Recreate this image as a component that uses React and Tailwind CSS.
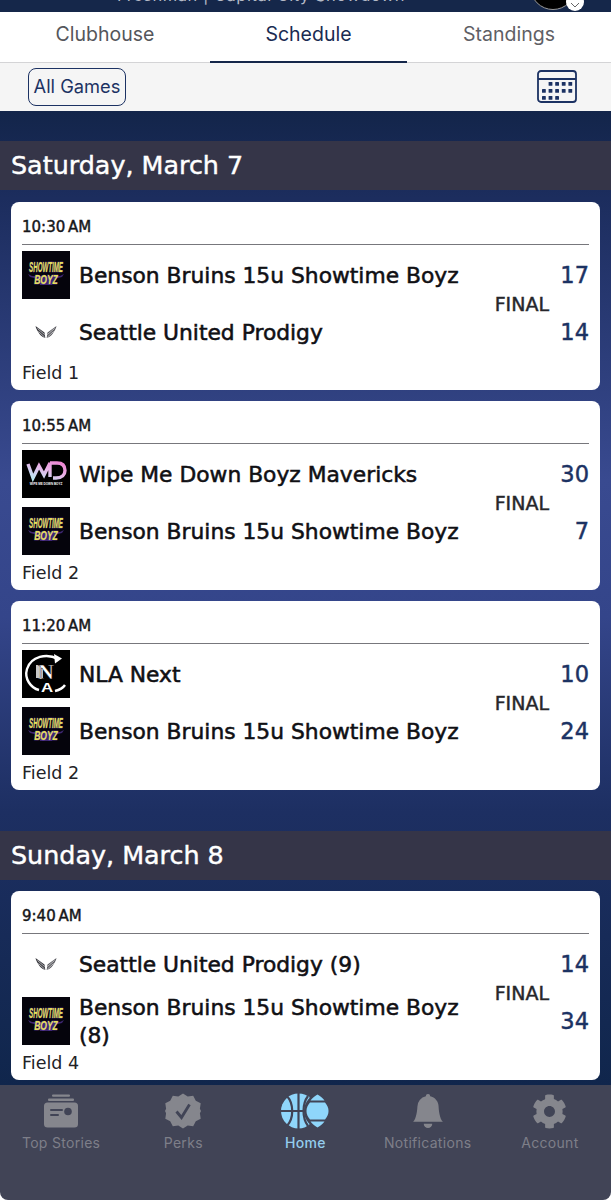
import React from "react";
import { FaCog } from "react-icons/fa";
import { BsBellFill } from "react-icons/bs";

function Showtime() {
  return (
    <svg viewBox="0 0 48 48" className="w-12 h-12 shrink-0 bg-black">
      <rect width="48" height="48" fill="#05040c" />
      <path d="M6 23l4 2h28l4-2-2 3-8 2-2 6H18l-2-6-8-2z" fill="#3d2670" />
      <g fontFamily="'Liberation Sans', sans-serif" fontWeight="700" fontStyle="italic" textAnchor="middle" fill="#e6e257" stroke="#7a4ac0" strokeWidth="0.7" paintOrder="stroke">
        <text transform="translate(24 21) scale(0.41 1)" fontSize="15">SHOWTIME</text>
        <text transform="translate(24 33) scale(0.68 1)" fontSize="12.500">BOYZ</text>
      </g>
    </svg>
  );
}

function Wings() {
  return (
    <svg viewBox="0 0 48 48" className="w-12 h-12 shrink-0">
      <path d="M13.500 18l9 6.500.8 5.500c-3.500-1-6-3.500-7-6-1.200-1.500-2.300-3.700-2.800-6z" fill="#3a3a40" />
      <path d="M34.500 18l-9 6.500-.8 5.500c3.500-1 6-3.500 7-6 1.200-1.500 2.300-3.700 2.800-6z" fill="#5a5a60" />
      <path d="M16.500 23.500l6 5.500M31.500 23.500l-6 5.500M15.500 20.500l7 6M32.500 20.500l-7 6" stroke="#fff" strokeWidth=".6" />
    </svg>
  );
}

function Wmd() {
  return (
    <svg viewBox="0 0 48 48" className="w-12 h-12 shrink-0">
      <defs>
        <linearGradient id="wmdg" x1="0" y1="1" x2="1" y2="0">
          <stop offset="0" stopColor="#b7ecf5" />
          <stop offset="0.55" stopColor="#e8b4e8" />
          <stop offset="1" stopColor="#ee7fd0" />
        </linearGradient>
      </defs>
      <rect width="48" height="48" fill="#000" />
      <path d="M6 14l5 14 6-12 5 9 6-12v14M28 13h7c6 0 8 3.500 8 7.500S40 28 34 28h-3" fill="none" stroke="url(#wmdg)" strokeWidth="3.400" />
      <text x="24" y="34.500" textAnchor="middle" fontSize="3" fontWeight="700" fill="#fff" fontFamily="'Liberation Sans', sans-serif">WIPE ME DOWN BOYZ</text>
    </svg>
  );
}

function Nla() {
  return (
    <svg viewBox="0 0 48 48" className="w-12 h-12 shrink-0">
      <rect width="48" height="48" fill="#000" />
      <path d="M36 9C25 3 9 6 5 19c-3 10 4 19 12 21M33 41c4-1 8-3 10-6" fill="none" stroke="#fff" strokeWidth="2.400" />
      <path d="M32 4l8 4.500-7 5z" fill="#fff" />
      <rect x="14" y="15" width="7" height="13" fill="#c9c9c9" />
      <text x="24" y="28.500" textAnchor="middle" fontSize="22" fontWeight="700" fill="#fff" fontFamily="'Liberation Serif', serif" stroke="#000" strokeWidth="0.4">N</text>
      <text transform="translate(25 41.500) scale(1.300 1)" textAnchor="middle" fontSize="13" fontWeight="700" fill="#fff" fontFamily="'Liberation Sans', sans-serif">A</text>
    </svg>
  );
}

const logos = { show: Showtime, wings: Wings, wmd: Wmd, nla: Nla };

function Team({ logo, name }) {
  const Logo = logos[logo];
  return (
    <div className="flex items-center gap-[9px] h-12">
      <Logo />
      <div className="w-[394px] text-[21.800px] leading-[28px] pt-[1px] text-[#101014] [-webkit-text-stroke:0.55px_#101014]">{name}</div>
    </div>
  );
}

function Card({ time, a, b, field, tall }) {
  return (
    <div className={tall ? "bg-white rounded-lg px-[11px] h-[189px] flex flex-col" : "bg-white rounded-lg px-[11px] h-[188px] flex flex-col"}>
      <div className="h-[43px] border-b border-[#77777c] flex items-center text-[15px] text-[#17171a] [-webkit-text-stroke:0.45px_#17171a] [word-spacing:-2px] pt-[8px] shrink-0">
        {time}
      </div>
      <div className="flex justify-between mt-[6px]">
        <div className="flex flex-col gap-[9px]">
          <Team logo={a.logo} name={a.name} />
          <Team logo={b.logo} name={b.name} />
        </div>
        <div className="flex items-center gap-[2px] shrink-0">
          <div className="w-[56px] text-right text-[19px] leading-none text-[#26262b] [-webkit-text-stroke:0.45px_#26262b] mt-[1px] whitespace-nowrap">
            FINAL
          </div>
          <div className="flex flex-col gap-[9px] w-[38px] text-right">
            <div className="h-12 flex items-center justify-end pt-[1px] text-[22.500px] text-[#1c3263] [-webkit-text-stroke:0.45px_#1c3263]">{a.score}</div>
            <div className="h-12 flex items-center justify-end pt-[1px] text-[22.500px] text-[#1c3263] [-webkit-text-stroke:0.45px_#1c3263]">{b.score}</div>
          </div>
        </div>
      </div>
      <div className="flex-1 flex items-center text-[17.500px] text-[#222226] pt-[1px]">{field}</div>
    </div>
  );
}

function DayHeader({ children }) {
  return (
    <div className="h-[49px] bg-[#353548] flex items-center px-[11px] text-[25.400px] text-white [-webkit-text-stroke:0.45px_#fff]">
      {children}
    </div>
  );
}

function CalendarIcon() {
  const dots = [];
  [12, 19, 26].forEach((y, r) => {
    for (let i = 0; i < 5; i++) {
      const on = r === 0 ? i >= 1 : r === 1 ? true : i < 3;
      if (on) dots.push(<rect key={r + "-" + i} x={5 + i * 6.600} y={y} width="3.800" height="3.800" rx="0.600" fill="#1c3263" />);
    }
  });
  return (
    <svg width="40" height="33" viewBox="0 0 40 33" fill="none">
      <rect x="1" y="1" width="38" height="31" rx="3" stroke="#1c3263" strokeWidth="1.800" />
      <path d="M1 9h38" stroke="#1c3263" strokeWidth="1.800" />
      {dots}
    </svg>
  );
}

function StoriesIcon() {
  return (
    <svg width="36" height="36" viewBox="0 0 36 36">
      <rect x="9" y="1.500" width="18" height="2.200" rx="1" fill="#85868d" />
      <rect x="5" y="5.500" width="26" height="2.500" rx="1" fill="#85868d" />
      <rect x="1" y="9.500" width="34" height="25" rx="3.500" fill="#85868d" />
      <rect x="7" y="16" width="13" height="2" rx="1" fill="#414456" />
      <rect x="7" y="21" width="9" height="2" rx="1" fill="#414456" />
      <circle cx="25" cy="18.500" r="3.800" fill="#414456" />
    </svg>
  );
}

function PerksIcon() {
  return (
    <svg width="36" height="36" viewBox="0 0 36 36">
      <path d="M18 0.500l4.700 3.100 5.500-.8 2.600 4.900 4.900 2.600-.8 5.500L36 18l-1.100 2.200.8 5.500-4.900 2.600-2.600 4.900-5.500-.8L18 35.500l-4.700-3.100-5.500.8-2.600-4.900-4.900-2.600.8-5.500L0 18l1.100-2.200-.8-5.500 4.900-2.600 2.600-4.900 5.500.8z" fill="#85868d" />
      <path d="M11.500 18.500l5 6 8-13" fill="none" stroke="#414456" strokeWidth="2.800" />
    </svg>
  );
}

function HomeIcon() {
  return (
    <svg width="48" height="36" viewBox="0 0 48 36">
      <circle cx="17.500" cy="18" r="17.500" fill="#8fd6fb" />
      <path d="M17.500 0v36M0 18h36M6 3c7 8 7 22 0 30M27 3c-6 8-6 22 0 30" fill="none" stroke="#414456" strokeWidth="2.200" />
      <path d="M36.500 -1C27 4 23 11 23 18s4 14 13.500 19C46 32 50 25 50 18S46 4 36.500 -1z" fill="#414456" />
      <path d="M36.500 1.500C33 3.500 31 5.500 29.500 7.500h14C42 5.500 40 3.500 36.500 1.500zM36.500 34.500C33 32.500 31 30.500 29.500 28.500h14C42 30.500 40 32.500 36.500 34.500z" fill="#8fd6fb" />
      <path d="M29 9.500h15c2.500 3 3.500 5.500 3.500 8.500s-1 5.500-3.500 8.500H29C26.500 23.500 25.500 21 25.500 18s1-5.500 3.500-8.500z" fill="#8fd6fb" />
    </svg>
  );
}

function NavItem({ icon, label, active }) {
  return (
    <div className="flex flex-col items-center">
      <div className="h-[36px] flex items-center justify-center">{icon}</div>
      <div className={active ? "mt-[5px] text-[14px] leading-[18px] font-medium tracking-[0.3px] text-[#94cdee] font-['Inter',sans-serif]" : "mt-[5px] text-[14px] leading-[18px] font-normal tracking-[0.3px] text-[#7e7f89] font-['Inter',sans-serif]"}>
        {label}
      </div>
    </div>
  );
}

export default function App() {
  const bb = "Benson Bruins 15u Showtime Boyz";
  return (
    <div className="w-[611px] h-[1200px] overflow-hidden flex flex-col bg-white font-['DejaVu_Sans',sans-serif]">
      <div className="h-[12px] bg-[#15274a] relative overflow-hidden shrink-0">
        <div className="absolute left-[117px] -top-[15px] text-[16.500px] leading-[20px] whitespace-nowrap text-[#b4b9c6] font-['Inter',sans-serif] tracking-[0.5px]">Freshman | Capital City Showdown</div>
        <div className="absolute left-[530px] -top-[36px] w-[46px] h-[46px] rounded-full bg-black border border-[#999]" />
        <div className="absolute left-[566px] -top-[7px] w-[18px] h-[18px] rounded-full bg-white flex items-center justify-center">
          <svg width="10" height="6" viewBox="0 0 10 6" className="mt-[6px]"><path d="M1 1l4 4 4-4" fill="none" stroke="#666" strokeWidth="1" /></svg>
        </div>
      </div>

      <div className="h-[51px] bg-white border-b border-[#d4d4d6] grid grid-cols-[210px_197px_204px] text-[19.500px] font-['Inter',sans-serif] shrink-0">
        <div className="flex items-center justify-center text-[#55565b] pb-[5px]">Clubhouse</div>
        <div className="flex items-center justify-center text-[#1a2b52] border-b-[2px] border-[#15274a] -mb-px pb-[4px]">Schedule</div>
        <div className="flex items-center justify-center text-[#5f6065] pb-[5px]">Standings</div>
      </div>

      <div className="h-[48px] bg-[#f5f5f5] flex items-center justify-between pl-[28px] pr-[34px] shrink-0">
        <div className="w-[98px] h-[38px] mt-[-1px] border-[1.500px] border-[#1c3263] rounded-lg flex items-center justify-center text-[18.300px] text-[#1c3263] font-['Inter',sans-serif]">
          All Games
        </div>
        <div className="mt-[-1px]"><CalendarIcon /></div>
      </div>

      <div className="flex-1 min-h-0 overflow-hidden bg-[linear-gradient(180deg,#13254a_0%,#1c2d5e_9%,#394a90_38%,#34458a_52%,#1d2f62_72%,#10264c_100%)] pt-[30px] flex flex-col">
        <DayHeader>Saturday, March 7</DayHeader>
        <div className="px-[11px] pt-[12px] flex flex-col gap-[11px]">
          <Card time="10:30 AM" a={{ logo: "show", name: bb, score: 17 }} b={{ logo: "wings", name: "Seattle United Prodigy", score: 14 }} field="Field 1" />
          <Card time="10:55 AM" tall a={{ logo: "wmd", name: "Wipe Me Down Boyz Mavericks", score: 30 }} b={{ logo: "show", name: bb, score: 7 }} field="Field 2" />
          <Card time="11:20 AM" tall a={{ logo: "nla", name: "NLA Next", score: 10 }} b={{ logo: "show", name: bb, score: 24 }} field="Field 2" />
        </div>
        <div className="mt-[41px]"><DayHeader>Sunday, March 8</DayHeader></div>
        <div className="px-[11px] pt-[11px]">
          <Card time="9:40 AM" tall a={{ logo: "wings", name: "Seattle United Prodigy (9)", score: 14 }} b={{ logo: "show", name: bb + " (8)", score: 34 }} field="Field 4" />
        </div>
      </div>

      <div className="h-[115px] bg-[#414456] rounded-b-lg grid grid-cols-5 pt-[8px] shrink-0">
        <NavItem icon={<StoriesIcon />} label="Top Stories" />
        <NavItem icon={<PerksIcon />} label="Perks" />
        <NavItem icon={<HomeIcon />} label="Home" active />
        <NavItem icon={<BsBellFill size={34} color="#85868d" />} label="Notifications" />
        <NavItem icon={<FaCog size={35} color="#85868d" />} label="Account" />
      </div>
    </div>
  );
}
